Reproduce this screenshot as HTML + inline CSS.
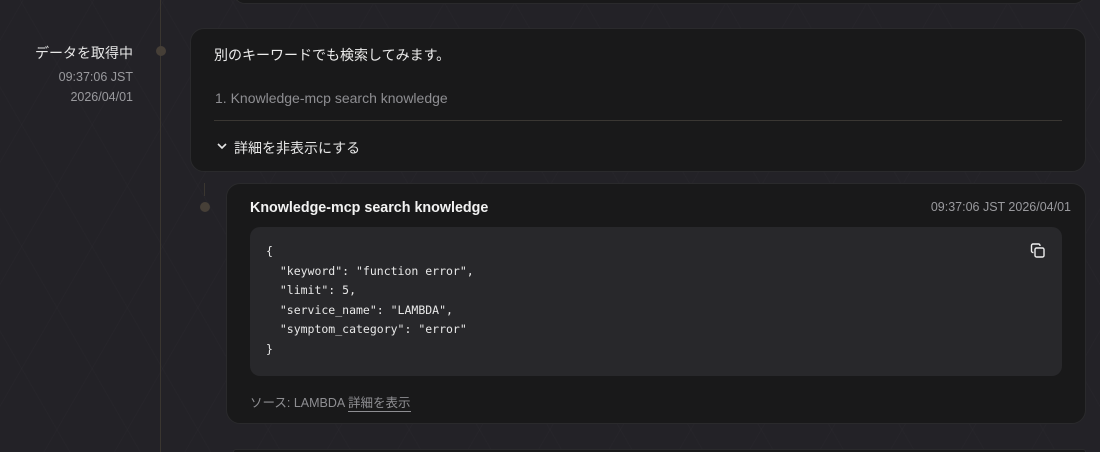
<!DOCTYPE html>
<html style="overflow:hidden;width:1100px;height:452px"><head><meta charset="utf-8"><style>
body{margin:0;width:1100px;height:452px;overflow:hidden;background:#232227;font-family:"Liberation Sans","Noto Sans CJK JP",sans-serif;position:relative}
.a{position:absolute}
.card{background:#19191a;border-radius:14px;border:1px solid #2a2a2c;box-sizing:border-box}
.mono{font-family:"DejaVu Sans Mono","Liberation Mono",monospace;font-size:11.5px;color:#e8e8e8;line-height:19.5px;white-space:pre}
</style></head><body>
<div class="a" style="left:0;top:0;width:1100px;height:452px;background:repeating-linear-gradient(60deg,transparent 0 60px,rgba(255,255,255,0.012) 60px 61px),repeating-linear-gradient(-60deg,transparent 0 60px,rgba(255,255,255,0.012) 60px 61px)"></div>
<div class="a card" style="left:233px;top:-20px;width:853px;height:24px"></div>
<div class="a card" style="left:233px;top:449px;width:853px;height:3px;border-radius:14px 14px 0 0;border-bottom:none"></div>
<div class="a" style="left:160px;top:0;width:1px;height:452px;background:#3a3630"></div>
<div class="a" style="left:156px;top:46px;width:10px;height:10px;border-radius:50%;background:#463f37"></div>
<div class="a" style="left:204px;top:183px;width:1px;height:13px;background:#3a3630"></div>
<div class="a" style="left:200px;top:202px;width:10px;height:10px;border-radius:50%;background:#463f37"></div>
<div class="a" style="right:967px;top:43px;color:#e6e6e6;font-size:14px;white-space:nowrap">データを取得中</div>
<div class="a" style="right:967px;top:67px;color:#9a9a9e;font-size:12.5px;text-align:right;line-height:20px">09:37:06 JST<br>2026/04/01</div>
<div class="a card" style="left:190px;top:28px;width:896px;height:144px"></div>
<div class="a" style="left:214px;top:45px;color:#ececec;font-size:14px">別のキーワードでも検索してみます。</div>
<div class="a" style="left:215px;top:90px;color:#8e8e92;font-size:14px">1. Knowledge-mcp search knowledge</div>
<div class="a" style="left:214px;top:120px;width:848px;height:1px;background:#3a3733"></div>
<svg class="a" style="left:216px;top:141px" width="12" height="10" viewBox="0 0 12 10"><path d="M2 3l4 4 4-4" stroke="#e6e6e6" stroke-width="1.6" fill="none"/></svg>
<div class="a" style="left:234px;top:138px;color:#e6e6e6;font-size:14px">詳細を非表示にする</div>
<div class="a card" style="left:226px;top:183px;width:860px;height:241px"></div>
<div class="a" style="left:250px;top:200px;color:#f2f2f2;font-size:14.3px;font-weight:bold">Knowledge-mcp search knowledge</div>
<div class="a" style="right:29px;top:200px;color:#9a9a9e;font-size:12.5px">09:37:06 JST 2026/04/01</div>
<div class="a" style="left:250px;top:227px;width:812px;height:149px;background:#28282b;border-radius:10px"></div>
<div class="a mono" style="left:266px;top:242px">{
  "keyword": "function error",
  "limit": 5,
  "service_name": "LAMBDA",
  "symptom_category": "error"
}</div>
<svg class="a" style="left:1030px;top:243px" width="16" height="16" viewBox="0 0 16 16" fill="none" stroke="#eee" stroke-width="1.4"><rect x="5" y="5" width="9" height="9" rx="1.5"/><path d="M10 3V2.5A1.5 1.5 0 0 0 8.5 1H3A1.5 1.5 0 0 0 1.5 2.5V8A1.5 1.5 0 0 0 3 9.5h.5"/></svg>
<div class="a" style="left:250px;top:392px;color:#8e8e92;font-size:12.5px">ソース: LAMBDA <span style="border-bottom:1px solid #8e8e92;padding-bottom:1px">詳細を表示</span></div>
</body></html>
